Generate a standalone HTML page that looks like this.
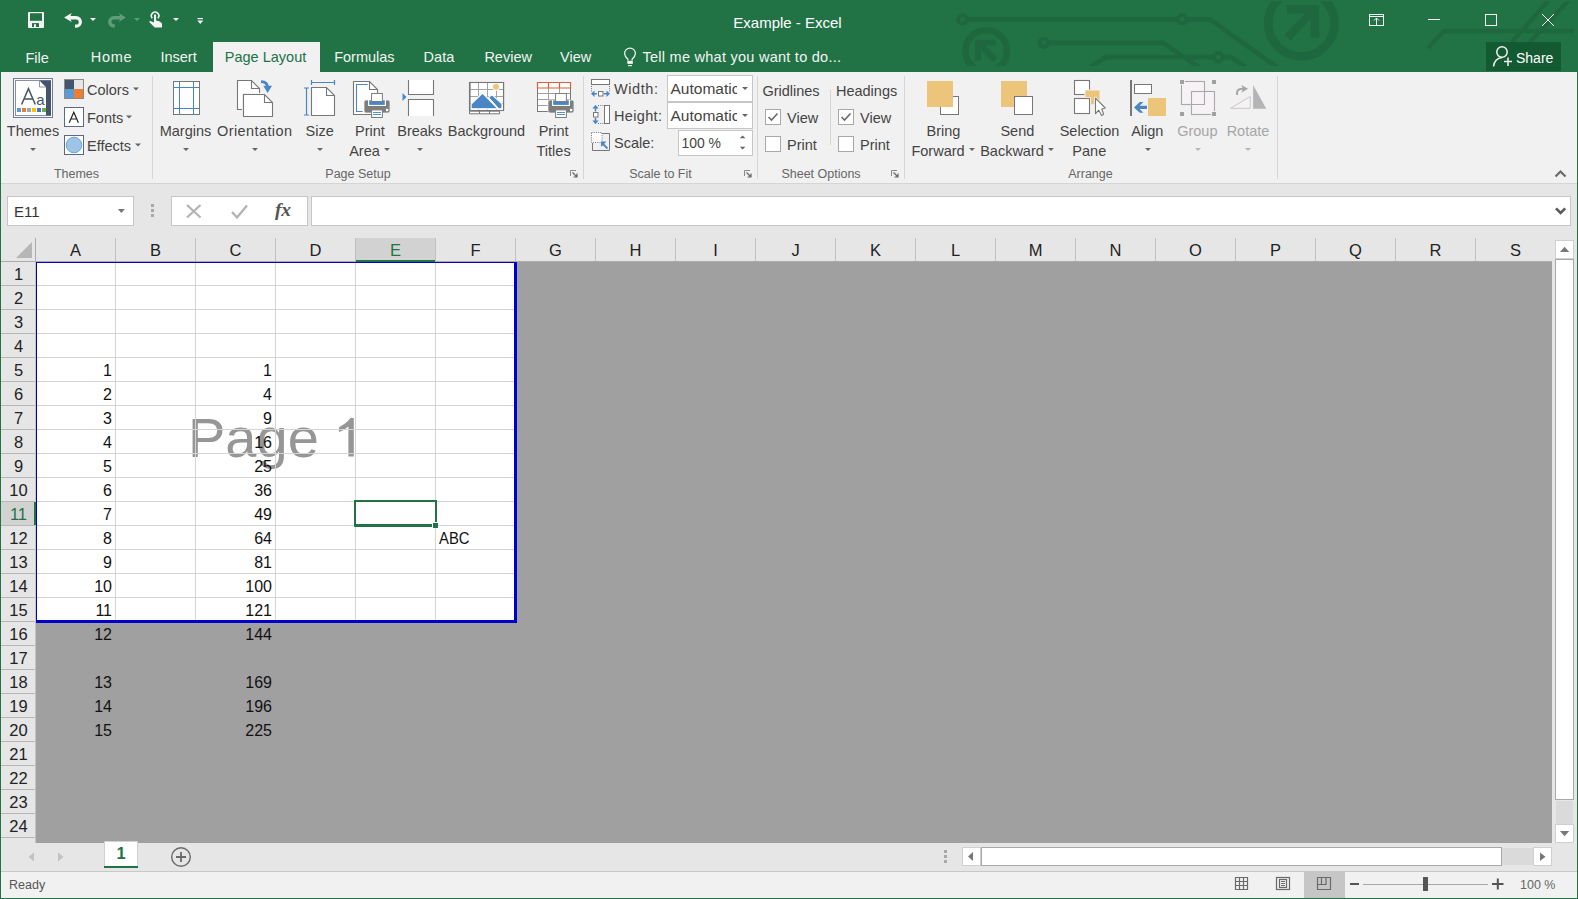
<!DOCTYPE html>
<html><head><meta charset="utf-8"><title>Example - Excel</title>
<style>html,body{margin:0;padding:0;overflow:hidden;background:#f1f1f1}svg{display:block}text{white-space:pre}</style>
</head><body>
<svg width="1578" height="899" viewBox="0 0 1578 899">
<rect x="0" y="0" width="1578" height="899" fill="#f1f1f1" />
<rect x="0" y="0" width="1578" height="72" fill="#217346" />
<defs><clipPath id="decclip"><rect x="900" y="1.3" width="678" height="64.7"/></clipPath></defs>
<g clip-path="url(#decclip)">
<g fill="none" stroke="#1f673f" stroke-width="4.7">
<path d="M966.5 19.4H1178M1186.5 19.4H1210L1278 68"/>
<path d="M1048 42.8H1163L1200 68"/>
<path d="M1089 68L1106 57.2H1214M1222.5 57.2H1231L1247 68"/>
</g>
<g fill="none" stroke="#1f673f" stroke-width="3.9">
<circle cx="962.4" cy="19.4" r="4.25"/>
<circle cx="1182.2" cy="19.4" r="4.25"/>
<circle cx="1043.8" cy="42.8" r="4.25"/>
<circle cx="1218.2" cy="57.2" r="4.25"/>
</g>
<circle cx="986.25" cy="50.95" r="20.75" fill="none" stroke="#1f673f" stroke-width="6.6"/>
<circle cx="1301.4" cy="23.3" r="33.1" fill="none" stroke="#1f673f" stroke-width="8.6"/>
<path d="M1428 48L1444 31H1574M1512 42L1549 0M1530 42L1569 0" fill="none" stroke="#1f673f" stroke-width="4.3"/>
<g fill="#1f673f">
<path d="M974.9 39.7H995.9V45.6H985.5L997.4 58L993.2 62.3L981.1 50.2V60.4H974.9Z"/>
<path d="M1287 5.1H1319.3V37.8H1310.7V19L1290.5 40.5L1284.7 34.7L1305 13.6H1287Z"/>
</g>
</g>
<rect x="28" y="12" width="16" height="16" rx="1" fill="#f3f3f3"/>
<rect x="30" y="13.2" width="12" height="7.6" fill="#217346" />
<rect x="32" y="23.1" width="7" height="3.9" fill="#217346" />
<rect x="34" y="24.2" width="2" height="2.8" fill="#f3f3f3" />
<path d="M69 17.75H76.15A4.2 4.2 0 0 1 76.15 26.15H75" fill="none" stroke="#f3f3f3" stroke-width="3.3"/>
<path d="M64.1 17.4L71.7 12.9L69.8 17.4L71.7 22Z" fill="#f3f3f3"/>
<path d="M90.0 18h6l-3.0 3z" fill="#f3f3f3"/>
<path d="M121 17.75H113.85A4.1 4.1 0 0 0 113.85 25.95H114.8" fill="none" stroke="#5f9d7a" stroke-width="3.3"/>
<path d="M125.8 17.4L118.9 13.1L120.8 17.4L118.9 22Z" fill="#5f9d7a"/>
<path d="M134.0 18h6l-3.0 3z" fill="#5f9d7a"/>
<path d="M152.3 18.3A3.7 3.7 0 1 1 157.9 18.3" fill="none" stroke="#f3f3f3" stroke-width="1.6"/>
<path d="M154 15.2a1 1 0 0 1 2.1 0V20.5L159.8 21.5L162 23.6V27.6H154.7L149 21.8L150.5 21L154 22.6Z" fill="#f3f3f3"/>
<path d="M173.0 18h6l-3.0 3z" fill="#f3f3f3"/>
<rect x="197.5" y="18" width="5.5" height="1.2" fill="#f3f3f3" />
<path d="M197.3 20.5h6l-3.0 3.5z" fill="#f3f3f3"/>
<text x="787.5" y="27.7" font-size="15" fill="#ffffff" text-anchor="middle" font-weight="normal" font-family="Liberation Sans" >Example - Excel</text>
<g fill="none" stroke="#f3f3f3" stroke-width="1">
<rect x="1369.5" y="14.5" width="14" height="11"/>
<path d="M1369.5 16.5h14M1376.5 25v-7M1374 20.5l2.5-2.5 2.5 2.5"/>
<path d="M1428 19.5h12"/>
<rect x="1485.5" y="14.5" width="11" height="11"/>
<path d="M1542 14l12 12M1554 14l-12 12"/>
</g>
<rect x="1486" y="42" width="75" height="29" fill="#135a32" />
<g fill="none" stroke="#f3f3f3" stroke-width="1.5">
<circle cx="1502" cy="52" r="5.2"/>
<path d="M1493.5 66.5q1-8 8.5-9"/>
<path d="M1504 61.5h8M1508 57.5v8.5"/>
</g>
<text x="1516" y="63.2" font-size="14" fill="#ffffff" text-anchor="start" font-weight="normal" font-family="Liberation Sans" >Share</text>
<rect x="213" y="42" width="107" height="30" fill="#f1f1f1" />
<text x="25.4" y="62.9" font-size="14.5" fill="#f3f3f3" text-anchor="start" font-weight="normal" font-family="Liberation Sans" >File</text>
<text x="90.7" y="62" font-size="14.5" fill="#f3f3f3" text-anchor="start" font-weight="normal" font-family="Liberation Sans" textLength="41" lengthAdjust="spacing">Home</text>
<text x="160.4" y="62" font-size="14.5" fill="#f3f3f3" text-anchor="start" font-weight="normal" font-family="Liberation Sans" >Insert</text>
<text x="334.2" y="62" font-size="14.5" fill="#f3f3f3" text-anchor="start" font-weight="normal" font-family="Liberation Sans" >Formulas</text>
<text x="423.6" y="62" font-size="14.5" fill="#f3f3f3" text-anchor="start" font-weight="normal" font-family="Liberation Sans" >Data</text>
<text x="484.4" y="62" font-size="14.5" fill="#f3f3f3" text-anchor="start" font-weight="normal" font-family="Liberation Sans" >Review</text>
<text x="560" y="62" font-size="14.5" fill="#f3f3f3" text-anchor="start" font-weight="normal" font-family="Liberation Sans" >View</text>
<text x="224.8" y="62" font-size="14.5" fill="#217346" text-anchor="start" font-weight="normal" font-family="Liberation Sans" >Page Layout</text>
<path d="M627.9 60.5V59.2Q624.6 56.2 624.6 53.5A5.4 5.4 0 0 1 635.4 53.5Q635.4 56.2 632.1 59.2V60.5" fill="none" stroke="#f3f3f3" stroke-width="1.25"/>
<rect x="627.3" y="60.8" width="5.5" height="3.1" fill="#f3f3f3" />
<rect x="628" y="65.1" width="4" height="1.1" fill="#f3f3f3" />
<text x="642.5" y="62" font-size="14.5" fill="#f3f3f3" text-anchor="start" font-weight="normal" font-family="Liberation Sans" textLength="198.5" lengthAdjust="spacing">Tell me what you want to do...</text>
<rect x="0" y="183" width="1578" height="1" fill="#d5d5d5" />
<rect x="0" y="184" width="1578" height="658" fill="#e6e6e6" />
<rect x="152" y="76" width="1" height="103" fill="#d6d6d6" />
<rect x="583" y="76" width="1" height="103" fill="#d6d6d6" />
<rect x="757" y="76" width="1" height="103" fill="#d6d6d6" />
<rect x="904" y="76" width="1" height="103" fill="#d6d6d6" />
<rect x="1277" y="76" width="1" height="103" fill="#d6d6d6" />
<rect x="13.5" y="78.5" width="39" height="39" fill="#f8f8f8" stroke="#6f7d95"/>
<rect x="15.5" y="80.5" width="35" height="35" fill="#ffffff" stroke="#8592aa"/>
<path d="M39.5 80.5h11.5v35h-5v-28.5z" fill="#44546a"/>
<path d="M39.5 80.5l6.5 6.5h-6.5z" fill="#ffffff" stroke="#7f8ba3" stroke-width="0.9"/>
<path d="M21.6 104.5L28.45 88.6L35.3 104.5M24.1 99H32.8" fill="none" stroke="#44546a" stroke-width="1.5"/>
<text x="40.3" y="104.5" font-size="15" fill="#44546a" text-anchor="middle" font-weight="normal" font-family="Liberation Sans" >a</text>
<rect x="17" y="108" width="4" height="4" fill="#5b9bd5" />
<rect x="22" y="108" width="4" height="4" fill="#ed7d31" />
<rect x="27" y="108" width="4" height="4" fill="#a5a5a5" />
<rect x="32" y="108" width="4" height="4" fill="#ffc000" />
<rect x="37" y="108" width="4" height="4" fill="#4472c4" />
<rect x="42" y="108" width="4" height="4" fill="#70ad47" />
<text x="33" y="136" font-size="14.5" fill="#444444" text-anchor="middle" font-weight="normal" font-family="Liberation Sans" >Themes</text>
<path d="M30.0 148h6l-3.0 3z" fill="#666"/>
<rect x="64.5" y="79.5" width="19" height="19" fill="#8a8a8a" stroke="#8a8a8a"/>
<rect x="65" y="80" width="9" height="9" fill="#44546a" />
<rect x="74" y="80" width="9" height="9" fill="#e7e6e6" />
<rect x="65" y="89" width="9" height="9" fill="#5b9bd5" />
<rect x="74" y="89" width="9" height="9" fill="#ed7d31" />
<text x="87" y="95" font-size="14.5" fill="#444444" text-anchor="start" font-weight="normal" font-family="Liberation Sans" >Colors</text>
<path d="M133.0 87.5h6l-3.0 3z" fill="#666"/>
<rect x="64.5" y="107.5" width="19" height="19" fill="#fff" stroke="#5a6a85"/>
<path d="M69.2 122.8L73.8 112.2L78.4 122.8M70.9 119H76.7" fill="none" stroke="#222" stroke-width="1.2"/>
<text x="87" y="122.7" font-size="14.5" fill="#444444" text-anchor="start" font-weight="normal" font-family="Liberation Sans" >Fonts</text>
<path d="M126.0 115.5h6l-3.0 3z" fill="#666"/>
<rect x="64.5" y="135.5" width="19" height="19" fill="#fff" stroke="#5a6a85"/>
<circle cx="74" cy="145" r="7.8" fill="#9dc3e6" stroke="#6fa4d8"/>
<text x="87" y="150.8" font-size="14.5" fill="#444444" text-anchor="start" font-weight="normal" font-family="Liberation Sans" >Effects</text>
<path d="M135.0 143.5h6l-3.0 3z" fill="#666"/>
<text x="76.5" y="178" font-size="12.5" fill="#666666" text-anchor="middle" font-weight="normal" font-family="Liberation Sans" >Themes</text>
<rect x="173.5" y="81.5" width="26" height="33" fill="#fff" stroke="#777777"/>
<path d="M174 87.5h25M174 108.5h25M179.5 82v32M193.5 82v32" stroke="#4a86c5" stroke-width="1"/>
<text x="185.5" y="136" font-size="14.5" fill="#444444" text-anchor="middle" font-weight="normal" font-family="Liberation Sans" >Margins</text>
<path d="M183.0 148h6l-3.0 3z" fill="#666"/>
<path d="M237.5 109.5V80.5H251.5L259.5 88.5V109.5Z" fill="#fff" stroke="#777777" stroke-width="1.1"/>
<path d="M251.5 80.5V88.5H259.5" fill="none" stroke="#777777" stroke-width="1.1"/>
<path d="M243.5 116.5V94.5H264.5L272.5 102.5V116.5Z" fill="#fff" stroke="#f1f1f1" stroke-width="3"/>
<path d="M243.5 116.5V94.5H264.5L272.5 102.5V116.5Z" fill="#fff" stroke="#777777" stroke-width="1.1"/>
<path d="M264.5 94.5V102.5H272.5" fill="none" stroke="#777777" stroke-width="1.1"/>
<path d="M261 81.6Q267.6 81.8 267.6 87.5" fill="none" stroke="#4a86c5" stroke-width="2.8"/>
<path d="M263.3 85.8H272L267.6 93Z" fill="#4a86c5"/>
<text x="254.5" y="136" font-size="14.5" fill="#444444" text-anchor="middle" font-weight="normal" font-family="Liberation Sans" textLength="75" lengthAdjust="spacing">Orientation</text>
<path d="M252.0 148h6l-3.0 3z" fill="#666"/>
<path d="M311.5 115.5V87.5H326.5L334.5 95.5V115.5Z" fill="#fff" stroke="#777777" stroke-width="1.1"/>
<path d="M326.5 87.5V95.5H334.5" fill="none" stroke="#777777" stroke-width="1.1"/>
<path d="M306.5 88v27M304 88h5M304 115h5M311 82.5h24M311.5 80v5M334.5 80v5" stroke="#4a86c5" stroke-width="1.2" fill="none"/>
<text x="319.6" y="136" font-size="14.5" fill="#444444" text-anchor="middle" font-weight="normal" font-family="Liberation Sans" >Size</text>
<path d="M317.0 148h6l-3.0 3z" fill="#666"/>
<path d="M353.5 114.5v-33h16l8 8v25z" fill="#fff" stroke="#777777" stroke-width="1.1"/>
<path d="M369.5 81.5v8h8" fill="none" stroke="#777777" stroke-width="1.1"/>
<path d="M367.6 84.5h-11.1v27h6.2" fill="none" stroke="#4a86c5" stroke-width="1.1"/>
<rect x="364" y="100" width="26" height="13" rx="2" fill="#7d7d7d" stroke="#f1f1f1" stroke-width="0.8"/>
<rect x="368" y="100" width="18" height="6" fill="#fff" />
<rect x="369.2" y="100.3" width="15.6" height="4.6" fill="#4a86c5" />
<rect x="371.6" y="93.5" width="10.8" height="8" fill="#fff" stroke="#7d7d7d" stroke-width="1"/>
<rect x="371.6" y="109.9" width="10.8" height="7.6" fill="#fff" stroke="#7d7d7d" stroke-width="1"/>
<path d="M373 112.5h8M373 114.5h8" stroke="#4a86c5" stroke-width="0.9"/>
<rect x="386" y="108.8" width="2.3" height="2.4" fill="#fff" />
<text x="370" y="136" font-size="14.5" fill="#444444" text-anchor="middle" font-weight="normal" font-family="Liberation Sans" >Print</text>
<text x="364.5" y="156" font-size="14.5" fill="#444444" text-anchor="middle" font-weight="normal" font-family="Liberation Sans" >Area</text>
<path d="M384.0 148h6l-3.0 3z" fill="#666"/>
<path d="M408.5 80v14.5h25v-14.5" fill="#fff" stroke="#777777" stroke-width="1.1"/>
<path d="M408.5 116v-16.5h25v16.5" fill="#fff" stroke="#777777" stroke-width="1.1"/>
<path d="M402.5 93v8l4-4z" fill="#4a86c5"/>
<text x="419.8" y="136" font-size="14.5" fill="#444444" text-anchor="middle" font-weight="normal" font-family="Liberation Sans" >Breaks</text>
<path d="M417.0 148h6l-3.0 3z" fill="#666"/>
<rect x="469.5" y="82.5" width="34" height="28" fill="#fff" stroke="#777777" stroke-width="1.1"/>
<path d="M470 89.5h33M470 96.5h33M470 103.5h33M478.5 83v27M487.5 83v27M496.5 83v27" stroke="#a2a2a2" stroke-width="1"/>
<path d="M469.5 111.2h10v2.6h-10zM479.5 111.2h10v2.6h-10zM489.5 111.2h10v2.6h-10z" fill="#fff" stroke="#777777" stroke-width="1"/>
<circle cx="496" cy="86.8" r="3.6" fill="#ecc57b" stroke="#fff" stroke-width="1"/>
<path d="M471.1 108.8V104L481.2 94.2Q482.4 93 483.6 94.2L498 108.8Z" fill="#4a86c5" stroke="#fff" stroke-width="1.2"/>
<path d="M488.6 97.6L490.6 95.6Q491.8 94.6 493 95.6L502 103.9V108.8H498.6Z" fill="#4a86c5" stroke="#fff" stroke-width="1.2"/>
<path d="M470 110.3v-27.8h33.6v27.8" fill="none" stroke="#777777" stroke-width="1.1"/>
<text x="486.5" y="136" font-size="14.5" fill="#444444" text-anchor="middle" font-weight="normal" font-family="Liberation Sans" >Background</text>
<rect x="537.5" y="82.5" width="33" height="29" fill="#fff" stroke="#7a7a7a"/>
<path d="M538 93.5h32M538 99.5h32M538 105.5h32M548.5 88v23M559.5 88v23" stroke="#a0a0a0" stroke-width="1"/>
<path d="M537.5 82.5h33v5.5h-33zM548.5 82.5v5.5M559.5 82.5v5.5" fill="none" stroke="#d9603b" stroke-width="1.2"/>
<rect x="548" y="100" width="26" height="13" rx="2" fill="#7d7d7d" stroke="#f1f1f1" stroke-width="0.8"/>
<rect x="552" y="100" width="18" height="6" fill="#fff" />
<rect x="553.2" y="100.3" width="15.6" height="4.6" fill="#4a86c5" />
<rect x="555.6" y="93.5" width="10.8" height="8" fill="#fff" stroke="#7d7d7d" stroke-width="1"/>
<rect x="555.6" y="109.9" width="10.8" height="7.6" fill="#fff" stroke="#7d7d7d" stroke-width="1"/>
<path d="M557 112.5h8M557 114.5h8" stroke="#4a86c5" stroke-width="0.9"/>
<rect x="570" y="108.8" width="2.3" height="2.4" fill="#fff" />
<text x="553.6" y="136" font-size="14.5" fill="#444444" text-anchor="middle" font-weight="normal" font-family="Liberation Sans" >Print</text>
<text x="553.6" y="156" font-size="14.5" fill="#444444" text-anchor="middle" font-weight="normal" font-family="Liberation Sans" >Titles</text>
<path d="M570.5 176v-5.5h5.5" fill="none" stroke="#888" stroke-width="1"/>
<path d="M572.5 172.5l4 4M577 173.5v3.5h-3.5" fill="none" stroke="#666" stroke-width="1.2"/>
<text x="358" y="178" font-size="12.5" fill="#666666" text-anchor="middle" font-weight="normal" font-family="Liberation Sans" >Page Setup</text>
<rect x="591.5" y="79.5" width="18" height="5" fill="#fff" stroke="#777777"/>
<path d="M591.5 86v6M609.5 86v6" stroke="#777777" stroke-dasharray="1 1.2"/>
<rect x="598.5" y="91.5" width="4.5" height="4.5" fill="#fff" stroke="#777777"/>
<path d="M592 93.8h5M604 93.8h5" stroke="#4a86c5" stroke-width="1.6"/>
<path d="M591 93.8l3.5-3.2v6.4zM610 93.8l-3.5-3.2v6.4z" fill="#4a86c5"/>
<text x="614" y="93.6" font-size="14.5" fill="#444444" text-anchor="start" font-weight="normal" font-family="Liberation Sans" textLength="44" lengthAdjust="spacing">Width:</text>
<rect x="667.5" y="75.5" width="85" height="26" fill="#fff" stroke="#c6c6c6"/>
<svg x="668" y="76" width="69" height="25"><text x="2.5" y="17.8" font-size="15.5" fill="#444" font-family="Liberation Sans">Automatic</text></svg>
<path d="M742.0 87h6l-3.0 3z" fill="#666"/>
<rect x="604.5" y="105.5" width="5" height="18" fill="#fff" stroke="#777777"/>
<path d="M598 105.5h6M598 123.5h6" stroke="#777777" stroke-dasharray="1 1.2"/>
<rect x="593.5" y="112.5" width="4.5" height="4.5" fill="#fff" stroke="#777777"/>
<path d="M595.5 106v5.5M595.5 118v5.5" stroke="#4a86c5" stroke-width="1.6"/>
<path d="M595.5 105l-3.2 3.5h6.4zM595.5 124l-3.2-3.5h6.4z" fill="#4a86c5"/>
<text x="614" y="120.7" font-size="14.5" fill="#444444" text-anchor="start" font-weight="normal" font-family="Liberation Sans" textLength="48" lengthAdjust="spacing">Height:</text>
<rect x="667.5" y="102.5" width="85" height="26" fill="#fff" stroke="#c6c6c6"/>
<svg x="668" y="103" width="69" height="25"><text x="2.5" y="17.8" font-size="15.5" fill="#444" font-family="Liberation Sans">Automatic</text></svg>
<path d="M742.0 114h6l-3.0 3z" fill="#666"/>
<rect x="591.5" y="132.5" width="10.5" height="10" fill="#fff" stroke="#777777" stroke-dasharray="1 1.2"/>
<path d="M602 133.5h7.5v17h-17v-7.5" fill="none" stroke="#777777"/>
<path d="M607.5 148.5l-6-6" stroke="#4a86c5" stroke-width="1.8"/>
<path d="M601 141.5h5.5l-5.5 5.5z" fill="#4a86c5"/>
<text x="614" y="147.8" font-size="14.5" fill="#444444" text-anchor="start" font-weight="normal" font-family="Liberation Sans" >Scale:</text>
<rect x="678.5" y="130.5" width="74" height="25" fill="#fff" stroke="#c6c6c6"/>
<text x="681.5" y="147.8" font-size="14.5" fill="#444444" text-anchor="start" font-weight="normal" font-family="Liberation Sans" textLength="39.5" lengthAdjust="spacingAndGlyphs">100 %</text>
<path d="M739.8 138.2h5.6l-2.8-2.8z M739.8 146.8h5.6l-2.8 2.8z" fill="#666"/>
<path d="M744.5 176v-5.5h5.5" fill="none" stroke="#888" stroke-width="1"/>
<path d="M746.5 172.5l4 4M751 173.5v3.5h-3.5" fill="none" stroke="#666" stroke-width="1.2"/>
<text x="660.5" y="178" font-size="12.5" fill="#666666" text-anchor="middle" font-weight="normal" font-family="Liberation Sans" >Scale to Fit</text>
<text x="791" y="96.3" font-size="14.5" fill="#444444" text-anchor="middle" font-weight="normal" font-family="Liberation Sans" >Gridlines</text>
<text x="866.6" y="96.3" font-size="14.5" fill="#444444" text-anchor="middle" font-weight="normal" font-family="Liberation Sans" >Headings</text>
<rect x="830" y="90" width="1" height="55" fill="#d6d6d6" />
<rect x="765.5" y="109.5" width="15" height="15" fill="#fff" stroke="#a8a8a8"/>
<path d="M768.5 117l3 3 6-6.5" fill="none" stroke="#6a6a6a" stroke-width="1.6"/>
<rect x="765.5" y="136.5" width="15" height="15" fill="#fff" stroke="#a8a8a8"/>
<rect x="838.5" y="109.5" width="15" height="15" fill="#fff" stroke="#a8a8a8"/>
<path d="M841.5 117l3 3 6-6.5" fill="none" stroke="#6a6a6a" stroke-width="1.6"/>
<rect x="838.5" y="136.5" width="15" height="15" fill="#fff" stroke="#a8a8a8"/>
<text x="787" y="122.7" font-size="14.5" fill="#444444" text-anchor="start" font-weight="normal" font-family="Liberation Sans" >View</text>
<text x="787" y="149.7" font-size="14.5" fill="#444444" text-anchor="start" font-weight="normal" font-family="Liberation Sans" >Print</text>
<text x="860" y="122.7" font-size="14.5" fill="#444444" text-anchor="start" font-weight="normal" font-family="Liberation Sans" >View</text>
<text x="860" y="149.7" font-size="14.5" fill="#444444" text-anchor="start" font-weight="normal" font-family="Liberation Sans" >Print</text>
<path d="M891.5 176v-5.5h5.5" fill="none" stroke="#888" stroke-width="1"/>
<path d="M893.5 172.5l4 4M898 173.5v3.5h-3.5" fill="none" stroke="#666" stroke-width="1.2"/>
<text x="821" y="178" font-size="12.5" fill="#666666" text-anchor="middle" font-weight="normal" font-family="Liberation Sans" >Sheet Options</text>
<rect x="940.5" y="96.5" width="18" height="18" fill="#fff" stroke="#777777"/>
<rect x="927" y="81" width="26" height="26" fill="#ecc57b" />
<text x="943.5" y="136" font-size="14.5" fill="#444444" text-anchor="middle" font-weight="normal" font-family="Liberation Sans" >Bring</text>
<text x="938" y="156" font-size="14.5" fill="#444444" text-anchor="middle" font-weight="normal" font-family="Liberation Sans" >Forward</text>
<path d="M969.0 148h6l-3.0 3z" fill="#666"/>
<rect x="1001" y="81" width="26" height="26" fill="#ecc57b" />
<rect x="1014.5" y="96.5" width="18" height="18" fill="#fff" stroke="#777777"/>
<text x="1017.4" y="136" font-size="14.5" fill="#444444" text-anchor="middle" font-weight="normal" font-family="Liberation Sans" >Send</text>
<text x="1012" y="156" font-size="14.5" fill="#444444" text-anchor="middle" font-weight="normal" font-family="Liberation Sans" >Backward</text>
<path d="M1048.0 148h6l-3.0 3z" fill="#666"/>
<rect x="1074.5" y="80.5" width="15" height="14" fill="#fff" stroke="#777777" stroke-width="1.1"/>
<rect x="1085" y="90" width="15" height="14.8" fill="#ecc57b" stroke="#f1f1f1" stroke-width="1"/>
<rect x="1074.5" y="98.5" width="15" height="15" fill="#fff" stroke="#f1f1f1" stroke-width="3"/>
<rect x="1074.5" y="98.5" width="15" height="15" fill="#fff" stroke="#777777" stroke-width="1.1"/>
<path d="M1095.5 98.2V113.7L1098.8 110.2L1101.7 115.6L1103.6 114.3L1101.8 109L1105.2 108Z" fill="#fff" stroke="#f1f1f1" stroke-width="3" stroke-linejoin="round"/>
<path d="M1095.5 98.2V113.7L1098.8 110.2L1101.7 115.6L1103.6 114.3L1101.8 109L1105.2 108Z" fill="#fff" stroke="#777777" stroke-width="1.1" stroke-linejoin="round"/>
<text x="1089.5" y="136" font-size="14.5" fill="#444444" text-anchor="middle" font-weight="normal" font-family="Liberation Sans" >Selection</text>
<text x="1089.3" y="156" font-size="14.5" fill="#444444" text-anchor="middle" font-weight="normal" font-family="Liberation Sans" >Pane</text>
<rect x="1130" y="80" width="2" height="36" fill="#777777" />
<rect x="1134.5" y="84.5" width="17" height="9" fill="#fff" stroke="#777777"/>
<rect x="1148" y="98" width="18" height="18" fill="#ecc57b" />
<path d="M1134 107.4L1139.8 102H1143.4L1139.6 105.8H1147V109H1139.6L1143.4 112.8H1139.8Z" fill="#4a86c5"/>
<text x="1147.3" y="136" font-size="14.5" fill="#444444" text-anchor="middle" font-weight="normal" font-family="Liberation Sans" >Align</text>
<path d="M1145.0 148h6l-3.0 3z" fill="#666"/>
<rect x="1181.5" y="81.5" width="23" height="23" fill="#f6f2f6" stroke="#a9a9a9" stroke-width="1.1"/>
<rect x="1191.5" y="91.5" width="23" height="23" fill="#f6f2f6" stroke="#a9a9a9" stroke-width="1.1"/>
<path d="M1204.5 91.5V104.5H1191.5" fill="none" stroke="#a9a9a9" stroke-width="1.1"/>
<rect x="1179.5" y="79.5" width="5" height="5" fill="#a0a0a0" stroke="#f1f1f1" stroke-width="1"/>
<rect x="1211.5" y="79.5" width="5" height="5" fill="#a0a0a0" stroke="#f1f1f1" stroke-width="1"/>
<rect x="1179.5" y="111.5" width="5" height="5" fill="#a0a0a0" stroke="#f1f1f1" stroke-width="1"/>
<rect x="1211.5" y="111.5" width="5" height="5" fill="#a0a0a0" stroke="#f1f1f1" stroke-width="1"/>
<text x="1197.3" y="136" font-size="14.5" fill="#a6a6a6" text-anchor="middle" font-weight="normal" font-family="Liberation Sans" >Group</text>
<path d="M1195.0 148h6l-3.0 3z" fill="#b8b8b8"/>
<path d="M1253.1 108.8V85.1L1266.3 108.8z" fill="#b4b3b5"/>
<path d="M1230.6 108.3L1250.2 96.6V108.3z" fill="#f6f2f6" stroke="#c8c8c8" stroke-width="1"/>
<path d="M1237 94.9V93Q1237 88.8 1243 88.8" fill="none" stroke="#a6a6a6" stroke-width="2"/>
<path d="M1241.4 85.1L1248.1 88.8L1241.4 92.7L1243 88.8z" fill="#a6a6a6"/>
<text x="1248" y="136" font-size="14.5" fill="#a6a6a6" text-anchor="middle" font-weight="normal" font-family="Liberation Sans" >Rotate</text>
<path d="M1245.0 148h6l-3.0 3z" fill="#b8b8b8"/>
<text x="1090.5" y="178" font-size="12.5" fill="#666666" text-anchor="middle" font-weight="normal" font-family="Liberation Sans" >Arrange</text>
<path d="M1555.5 176.5l5-5 5 5" fill="none" stroke="#6a6a6a" stroke-width="2.2"/>
<rect x="7.5" y="196.5" width="126" height="29" fill="#fff" stroke="#c6c6c6"/>
<text x="14" y="216.8" font-size="15" fill="#333" text-anchor="start" font-weight="normal" font-family="Liberation Sans" >E11</text>
<path d="M117.9 209h7l-3.5 4z" fill="#777"/>
<rect x="151" y="204" width="3" height="3" fill="#a8a8a8" />
<rect x="151" y="209" width="3" height="3" fill="#a8a8a8" />
<rect x="151" y="214" width="3" height="3" fill="#a8a8a8" />
<rect x="171.5" y="196.5" width="136" height="29" fill="#fff" stroke="#c6c6c6"/>
<path d="M187 205l13.5 12.5M200.5 205l-13.5 12.5" stroke="#b4b4b4" stroke-width="2.3"/>
<path d="M232 212l5 5.5 10-12" fill="none" stroke="#b4b4b4" stroke-width="2.4"/>
<text x="283" y="216" font-size="19.5" fill="#555" text-anchor="middle" font-weight="bold" font-family="Liberation Serif" font-style="italic">fx</text>
<rect x="311.5" y="196.5" width="1259" height="29" fill="#fff" stroke="#c6c6c6"/>
<path d="M1556 208.3l4.6 4.6 4.6-4.6" fill="none" stroke="#5a5a5a" stroke-width="2.6"/>
<rect x="0" y="238" width="1555" height="24" fill="#e6e6e6" />
<rect x="36" y="262" width="1516" height="581" fill="#a0a0a0" />
<rect x="36" y="262" width="480" height="360" fill="#ffffff" />
<text x="188" y="456.6" font-size="56" fill="#969696" font-family="Liberation Sans">Page</text>
<path d="M348.4 456.5V426.5Q344 430.5 339 432V427.3Q346.5 423.5 350.5 418.1H353.8V456.5Z" fill="#969696"/>
<rect x="115" y="262" width="1" height="359" fill="#d4d4d4" />
<rect x="195" y="262" width="1" height="359" fill="#d4d4d4" />
<rect x="275" y="262" width="1" height="359" fill="#d4d4d4" />
<rect x="355" y="262" width="1" height="359" fill="#d4d4d4" />
<rect x="435" y="262" width="1" height="359" fill="#d4d4d4" />
<rect x="36" y="285" width="479" height="1" fill="#d4d4d4" />
<rect x="36" y="309" width="479" height="1" fill="#d4d4d4" />
<rect x="36" y="333" width="479" height="1" fill="#d4d4d4" />
<rect x="36" y="357" width="479" height="1" fill="#d4d4d4" />
<rect x="36" y="381" width="479" height="1" fill="#d4d4d4" />
<rect x="36" y="405" width="479" height="1" fill="#d4d4d4" />
<rect x="36" y="429" width="479" height="1" fill="#d4d4d4" />
<rect x="36" y="453" width="479" height="1" fill="#d4d4d4" />
<rect x="36" y="477" width="479" height="1" fill="#d4d4d4" />
<rect x="36" y="501" width="479" height="1" fill="#d4d4d4" />
<rect x="36" y="525" width="479" height="1" fill="#d4d4d4" />
<rect x="36" y="549" width="479" height="1" fill="#d4d4d4" />
<rect x="36" y="573" width="479" height="1" fill="#d4d4d4" />
<rect x="36" y="597" width="479" height="1" fill="#d4d4d4" />
<rect x="356" y="238" width="79" height="24" fill="#d2d2d2" />
<rect x="35" y="238" width="1" height="24" fill="#ababab" />
<rect x="115" y="238" width="1" height="24" fill="#c0c0c0" />
<rect x="195" y="238" width="1" height="24" fill="#c0c0c0" />
<rect x="275" y="238" width="1" height="24" fill="#c0c0c0" />
<rect x="355" y="238" width="1" height="24" fill="#c0c0c0" />
<rect x="435" y="238" width="1" height="24" fill="#c0c0c0" />
<rect x="515" y="238" width="1" height="24" fill="#c0c0c0" />
<rect x="595" y="238" width="1" height="24" fill="#c0c0c0" />
<rect x="675" y="238" width="1" height="24" fill="#c0c0c0" />
<rect x="755" y="238" width="1" height="24" fill="#c0c0c0" />
<rect x="835" y="238" width="1" height="24" fill="#c0c0c0" />
<rect x="915" y="238" width="1" height="24" fill="#c0c0c0" />
<rect x="995" y="238" width="1" height="24" fill="#c0c0c0" />
<rect x="1075" y="238" width="1" height="24" fill="#c0c0c0" />
<rect x="1155" y="238" width="1" height="24" fill="#c0c0c0" />
<rect x="1235" y="238" width="1" height="24" fill="#c0c0c0" />
<rect x="1315" y="238" width="1" height="24" fill="#c0c0c0" />
<rect x="1395" y="238" width="1" height="24" fill="#c0c0c0" />
<rect x="1475" y="238" width="1" height="24" fill="#c0c0c0" />
<rect x="0" y="261" width="1552" height="1" fill="#ababab" />
<rect x="356" y="260" width="79" height="2" fill="#217346" />
<text x="75.5" y="256" font-size="16.5" fill="#222" text-anchor="middle" font-weight="normal" font-family="Liberation Sans" >A</text>
<text x="155.5" y="256" font-size="16.5" fill="#222" text-anchor="middle" font-weight="normal" font-family="Liberation Sans" >B</text>
<text x="235.5" y="256" font-size="16.5" fill="#222" text-anchor="middle" font-weight="normal" font-family="Liberation Sans" >C</text>
<text x="315.5" y="256" font-size="16.5" fill="#222" text-anchor="middle" font-weight="normal" font-family="Liberation Sans" >D</text>
<text x="395.5" y="256" font-size="16.5" fill="#217346" text-anchor="middle" font-weight="normal" font-family="Liberation Sans" >E</text>
<text x="475.5" y="256" font-size="16.5" fill="#222" text-anchor="middle" font-weight="normal" font-family="Liberation Sans" >F</text>
<text x="555.5" y="256" font-size="16.5" fill="#222" text-anchor="middle" font-weight="normal" font-family="Liberation Sans" >G</text>
<text x="635.5" y="256" font-size="16.5" fill="#222" text-anchor="middle" font-weight="normal" font-family="Liberation Sans" >H</text>
<text x="715.5" y="256" font-size="16.5" fill="#222" text-anchor="middle" font-weight="normal" font-family="Liberation Sans" >I</text>
<text x="795.5" y="256" font-size="16.5" fill="#222" text-anchor="middle" font-weight="normal" font-family="Liberation Sans" >J</text>
<text x="875.5" y="256" font-size="16.5" fill="#222" text-anchor="middle" font-weight="normal" font-family="Liberation Sans" >K</text>
<text x="955.5" y="256" font-size="16.5" fill="#222" text-anchor="middle" font-weight="normal" font-family="Liberation Sans" >L</text>
<text x="1035.5" y="256" font-size="16.5" fill="#222" text-anchor="middle" font-weight="normal" font-family="Liberation Sans" >M</text>
<text x="1115.5" y="256" font-size="16.5" fill="#222" text-anchor="middle" font-weight="normal" font-family="Liberation Sans" >N</text>
<text x="1195.5" y="256" font-size="16.5" fill="#222" text-anchor="middle" font-weight="normal" font-family="Liberation Sans" >O</text>
<text x="1275.5" y="256" font-size="16.5" fill="#222" text-anchor="middle" font-weight="normal" font-family="Liberation Sans" >P</text>
<text x="1355.5" y="256" font-size="16.5" fill="#222" text-anchor="middle" font-weight="normal" font-family="Liberation Sans" >Q</text>
<text x="1435.5" y="256" font-size="16.5" fill="#222" text-anchor="middle" font-weight="normal" font-family="Liberation Sans" >R</text>
<text x="1515.5" y="256" font-size="16.5" fill="#222" text-anchor="middle" font-weight="normal" font-family="Liberation Sans" >S</text>
<path d="M32 242v16h-16z" fill="#b6b6b6"/>
<rect x="1" y="262" width="34" height="581" fill="#e6e6e6" />
<rect x="35" y="262" width="1" height="581" fill="#c4c4c4" />
<rect x="1" y="502" width="33" height="23" fill="#d2d2d2" />
<rect x="34" y="502" width="2" height="23" fill="#217346" />
<rect x="1" y="285" width="34" height="1" fill="#b8b8b8" />
<rect x="1" y="309" width="34" height="1" fill="#b8b8b8" />
<rect x="1" y="333" width="34" height="1" fill="#b8b8b8" />
<rect x="1" y="357" width="34" height="1" fill="#b8b8b8" />
<rect x="1" y="381" width="34" height="1" fill="#b8b8b8" />
<rect x="1" y="405" width="34" height="1" fill="#b8b8b8" />
<rect x="1" y="429" width="34" height="1" fill="#b8b8b8" />
<rect x="1" y="453" width="34" height="1" fill="#b8b8b8" />
<rect x="1" y="477" width="34" height="1" fill="#b8b8b8" />
<rect x="1" y="501" width="34" height="1" fill="#b8b8b8" />
<rect x="1" y="525" width="34" height="1" fill="#b8b8b8" />
<rect x="1" y="549" width="34" height="1" fill="#b8b8b8" />
<rect x="1" y="573" width="34" height="1" fill="#b8b8b8" />
<rect x="1" y="597" width="34" height="1" fill="#b8b8b8" />
<rect x="1" y="621" width="34" height="1" fill="#b8b8b8" />
<rect x="1" y="645" width="34" height="1" fill="#b8b8b8" />
<rect x="1" y="669" width="34" height="1" fill="#b8b8b8" />
<rect x="1" y="693" width="34" height="1" fill="#b8b8b8" />
<rect x="1" y="717" width="34" height="1" fill="#b8b8b8" />
<rect x="1" y="741" width="34" height="1" fill="#b8b8b8" />
<rect x="1" y="765" width="34" height="1" fill="#b8b8b8" />
<rect x="1" y="789" width="34" height="1" fill="#b8b8b8" />
<rect x="1" y="813" width="34" height="1" fill="#b8b8b8" />
<rect x="1" y="837" width="34" height="1" fill="#b8b8b8" />
<rect x="1" y="861" width="34" height="1" fill="#b8b8b8" />
<text x="18.5" y="280" font-size="16.5" fill="#222" text-anchor="middle" font-weight="normal" font-family="Liberation Sans" >1</text>
<text x="18.5" y="304" font-size="16.5" fill="#222" text-anchor="middle" font-weight="normal" font-family="Liberation Sans" >2</text>
<text x="18.5" y="328" font-size="16.5" fill="#222" text-anchor="middle" font-weight="normal" font-family="Liberation Sans" >3</text>
<text x="18.5" y="352" font-size="16.5" fill="#222" text-anchor="middle" font-weight="normal" font-family="Liberation Sans" >4</text>
<text x="18.5" y="376" font-size="16.5" fill="#222" text-anchor="middle" font-weight="normal" font-family="Liberation Sans" >5</text>
<text x="18.5" y="400" font-size="16.5" fill="#222" text-anchor="middle" font-weight="normal" font-family="Liberation Sans" >6</text>
<text x="18.5" y="424" font-size="16.5" fill="#222" text-anchor="middle" font-weight="normal" font-family="Liberation Sans" >7</text>
<text x="18.5" y="448" font-size="16.5" fill="#222" text-anchor="middle" font-weight="normal" font-family="Liberation Sans" >8</text>
<text x="18.5" y="472" font-size="16.5" fill="#222" text-anchor="middle" font-weight="normal" font-family="Liberation Sans" >9</text>
<text x="18.5" y="496" font-size="16.5" fill="#222" text-anchor="middle" font-weight="normal" font-family="Liberation Sans" >10</text>
<text x="18.5" y="520" font-size="16.5" fill="#217346" text-anchor="middle" font-weight="normal" font-family="Liberation Sans" >11</text>
<text x="18.5" y="544" font-size="16.5" fill="#222" text-anchor="middle" font-weight="normal" font-family="Liberation Sans" >12</text>
<text x="18.5" y="568" font-size="16.5" fill="#222" text-anchor="middle" font-weight="normal" font-family="Liberation Sans" >13</text>
<text x="18.5" y="592" font-size="16.5" fill="#222" text-anchor="middle" font-weight="normal" font-family="Liberation Sans" >14</text>
<text x="18.5" y="616" font-size="16.5" fill="#222" text-anchor="middle" font-weight="normal" font-family="Liberation Sans" >15</text>
<text x="18.5" y="640" font-size="16.5" fill="#222" text-anchor="middle" font-weight="normal" font-family="Liberation Sans" >16</text>
<text x="18.5" y="664" font-size="16.5" fill="#222" text-anchor="middle" font-weight="normal" font-family="Liberation Sans" >17</text>
<text x="18.5" y="688" font-size="16.5" fill="#222" text-anchor="middle" font-weight="normal" font-family="Liberation Sans" >18</text>
<text x="18.5" y="712" font-size="16.5" fill="#222" text-anchor="middle" font-weight="normal" font-family="Liberation Sans" >19</text>
<text x="18.5" y="736" font-size="16.5" fill="#222" text-anchor="middle" font-weight="normal" font-family="Liberation Sans" >20</text>
<text x="18.5" y="760" font-size="16.5" fill="#222" text-anchor="middle" font-weight="normal" font-family="Liberation Sans" >21</text>
<text x="18.5" y="784" font-size="16.5" fill="#222" text-anchor="middle" font-weight="normal" font-family="Liberation Sans" >22</text>
<text x="18.5" y="808" font-size="16.5" fill="#222" text-anchor="middle" font-weight="normal" font-family="Liberation Sans" >23</text>
<text x="18.5" y="832" font-size="16.5" fill="#222" text-anchor="middle" font-weight="normal" font-family="Liberation Sans" >24</text>
<rect x="36" y="262" width="478" height="1" fill="#0000cc" />
<rect x="36" y="262" width="1" height="358" fill="#0000cc" />
<rect x="514" y="262" width="3" height="361" fill="#0000cc" />
<rect x="36" y="620" width="481" height="3" fill="#0000cc" />
<text x="112" y="376" font-size="16" fill="#111" text-anchor="end" font-weight="normal" font-family="Liberation Sans" >1</text>
<text x="272" y="376" font-size="16" fill="#111" text-anchor="end" font-weight="normal" font-family="Liberation Sans" >1</text>
<text x="112" y="400" font-size="16" fill="#111" text-anchor="end" font-weight="normal" font-family="Liberation Sans" >2</text>
<text x="272" y="400" font-size="16" fill="#111" text-anchor="end" font-weight="normal" font-family="Liberation Sans" >4</text>
<text x="112" y="424" font-size="16" fill="#111" text-anchor="end" font-weight="normal" font-family="Liberation Sans" >3</text>
<text x="272" y="424" font-size="16" fill="#111" text-anchor="end" font-weight="normal" font-family="Liberation Sans" >9</text>
<text x="112" y="448" font-size="16" fill="#111" text-anchor="end" font-weight="normal" font-family="Liberation Sans" >4</text>
<text x="272" y="448" font-size="16" fill="#111" text-anchor="end" font-weight="normal" font-family="Liberation Sans" >16</text>
<text x="112" y="472" font-size="16" fill="#111" text-anchor="end" font-weight="normal" font-family="Liberation Sans" >5</text>
<text x="272" y="472" font-size="16" fill="#111" text-anchor="end" font-weight="normal" font-family="Liberation Sans" >25</text>
<text x="112" y="496" font-size="16" fill="#111" text-anchor="end" font-weight="normal" font-family="Liberation Sans" >6</text>
<text x="272" y="496" font-size="16" fill="#111" text-anchor="end" font-weight="normal" font-family="Liberation Sans" >36</text>
<text x="112" y="520" font-size="16" fill="#111" text-anchor="end" font-weight="normal" font-family="Liberation Sans" >7</text>
<text x="272" y="520" font-size="16" fill="#111" text-anchor="end" font-weight="normal" font-family="Liberation Sans" >49</text>
<text x="112" y="544" font-size="16" fill="#111" text-anchor="end" font-weight="normal" font-family="Liberation Sans" >8</text>
<text x="272" y="544" font-size="16" fill="#111" text-anchor="end" font-weight="normal" font-family="Liberation Sans" >64</text>
<text x="112" y="568" font-size="16" fill="#111" text-anchor="end" font-weight="normal" font-family="Liberation Sans" >9</text>
<text x="272" y="568" font-size="16" fill="#111" text-anchor="end" font-weight="normal" font-family="Liberation Sans" >81</text>
<text x="112" y="592" font-size="16" fill="#111" text-anchor="end" font-weight="normal" font-family="Liberation Sans" >10</text>
<text x="272" y="592" font-size="16" fill="#111" text-anchor="end" font-weight="normal" font-family="Liberation Sans" >100</text>
<text x="112" y="616" font-size="16" fill="#111" text-anchor="end" font-weight="normal" font-family="Liberation Sans" >11</text>
<text x="272" y="616" font-size="16" fill="#111" text-anchor="end" font-weight="normal" font-family="Liberation Sans" >121</text>
<text x="112" y="640" font-size="16" fill="#111" text-anchor="end" font-weight="normal" font-family="Liberation Sans" >12</text>
<text x="272" y="640" font-size="16" fill="#111" text-anchor="end" font-weight="normal" font-family="Liberation Sans" >144</text>
<text x="112" y="688" font-size="16" fill="#111" text-anchor="end" font-weight="normal" font-family="Liberation Sans" >13</text>
<text x="272" y="688" font-size="16" fill="#111" text-anchor="end" font-weight="normal" font-family="Liberation Sans" >169</text>
<text x="112" y="712" font-size="16" fill="#111" text-anchor="end" font-weight="normal" font-family="Liberation Sans" >14</text>
<text x="272" y="712" font-size="16" fill="#111" text-anchor="end" font-weight="normal" font-family="Liberation Sans" >196</text>
<text x="112" y="736" font-size="16" fill="#111" text-anchor="end" font-weight="normal" font-family="Liberation Sans" >15</text>
<text x="272" y="736" font-size="16" fill="#111" text-anchor="end" font-weight="normal" font-family="Liberation Sans" >225</text>
<text x="439" y="544" font-size="16" fill="#111" text-anchor="start" font-weight="normal" font-family="Liberation Sans" textLength="30.5" lengthAdjust="spacingAndGlyphs">ABC</text>
<path d="M355 502.5v-1.5h81v21M433 526v-1h-78v-23" fill="none" stroke="#217346" stroke-width="2"/>
<rect x="354" y="500" width="83" height="2" fill="#217346" />
<rect x="354" y="500" width="2" height="27" fill="#217346" />
<rect x="354" y="525" width="78" height="2" fill="#217346" />
<rect x="435" y="500" width="2" height="21" fill="#217346" />
<rect x="432" y="522" width="6" height="6" fill="#ffffff" />
<rect x="433" y="523" width="5" height="5" fill="#217346" />
<rect x="1555.5" y="240.5" width="18" height="18" fill="#fff" stroke="#cfcfcf"/>
<path d="M1560 252h9.2l-4.6-5.3z" fill="#777"/>
<rect x="1555.5" y="259.5" width="18" height="540" fill="#fff" stroke="#a8a8a8"/>
<rect x="1556" y="801" width="17" height="23" fill="#dadada" />
<rect x="1555.5" y="824.5" width="18" height="18" fill="#fff" stroke="#cfcfcf"/>
<path d="M1560 831h9.2l-4.6 5.3z" fill="#777"/>
<rect x="0" y="843" width="1578" height="28" fill="#e6e6e6" />
<path d="M34 852.5v9l-5.5-4.5z" fill="#c2c2c2"/>
<path d="M58 852.5v9l5.5-4.5z" fill="#c2c2c2"/>
<rect x="104.5" y="841.5" width="33" height="25" fill="#fff" stroke="#d0d0d0"/>
<rect x="104" y="866" width="34" height="2" fill="#217346" />
<text x="121" y="859.3" font-size="16.5" fill="#217346" text-anchor="middle" font-weight="bold" font-family="Liberation Sans" >1</text>
<circle cx="181" cy="857" r="9.3" fill="none" stroke="#6a6a6a" stroke-width="1.4"/>
<path d="M176 857h10M181 852v10" stroke="#6a6a6a" stroke-width="1.8"/>
<rect x="944" y="850" width="3" height="3" fill="#a8a8a8" />
<rect x="944" y="855" width="3" height="3" fill="#a8a8a8" />
<rect x="944" y="860" width="3" height="3" fill="#a8a8a8" />
<rect x="962.5" y="847.5" width="18" height="18" fill="#fff" stroke="#cfcfcf"/>
<path d="M973 852v9l-5-4.5z" fill="#777"/>
<rect x="981.5" y="847.5" width="520" height="18" fill="#fff" stroke="#a8a8a8"/>
<rect x="1502" y="848" width="31" height="17" fill="#dadada" />
<rect x="1533.5" y="847.5" width="18" height="18" fill="#fff" stroke="#cfcfcf"/>
<path d="M1540 852.5v8.5l5.5-4.25z" fill="#777"/>
<rect x="0" y="871" width="1578" height="1" fill="#c8c8c8" />
<rect x="0" y="872" width="1578" height="26" fill="#f1f1f1" />
<text x="9" y="889" font-size="12.5" fill="#555" text-anchor="start" font-weight="normal" font-family="Liberation Sans" >Ready</text>
<path d="M1235.5 877.5h12v12h-12zM1235.5 881.5h12M1235.5 885.5h12M1239.5 877.5v12M1243.5 877.5v12" fill="none" stroke="#6a6a6a" stroke-width="1.2"/>
<rect x="1276.5" y="877.5" width="13" height="12" fill="none" stroke="#6a6a6a" stroke-width="1.2"/>
<rect x="1279.5" y="879.5" width="7" height="8" fill="none" stroke="#6a6a6a" stroke-width="1.2"/>
<path d="M1281 881.5h4M1281 883.5h4M1281 885.5h4" stroke="#6a6a6a"/>
<rect x="1304" y="872" width="41" height="26" fill="#c6c6c6" />
<path d="M1317.5 877.5h13v12h-13zM1317.5 884.5h8.5v-7M1321.5 877.5v7" fill="none" stroke="#6a6a6a" stroke-width="1.2"/>
<rect x="1350" y="883" width="9" height="2" fill="#555" />
<rect x="1363" y="884" width="125" height="1" fill="#a8a8a8" />
<rect x="1423" y="877" width="5" height="14" fill="#555" />
<path d="M1492 884h11.5M1497.8 878.5v11" stroke="#555" stroke-width="2"/>
<text x="1520" y="889" font-size="12.5" fill="#666" text-anchor="start" font-weight="normal" font-family="Liberation Sans" >100 %</text>
<rect x="0" y="72" width="1" height="827" fill="#217346" />
<rect x="1577" y="72" width="1" height="827" fill="#217346" />
<rect x="0" y="898" width="1578" height="1" fill="#217346" />
</svg>
</body></html>
